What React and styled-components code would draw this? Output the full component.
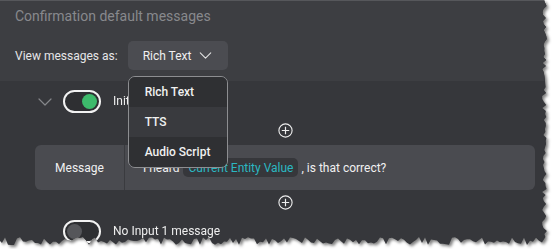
import React from 'react'
import styled, { createGlobalStyle } from 'styled-components'

const GlobalStyle = createGlobalStyle`
  html, body {
    margin: 0;
    background: #ffffff;
  }
  body {
    font-family: Roboto, "Liberation Sans", sans-serif;
  }
`

// jagged "torn paper" outline for the right and bottom edges
function tornEdge(w, h) {
  let seed = 11
  const rnd = () => {
    seed = (seed * 9301 + 49297) % 233280
    return seed / 233280
  }
  const pts = ['0px 0px', `${w - 3}px 0px`]
  for (let y = 3; y < h - 6; y += 3) {
    pts.push(`${(w - 5 + rnd() * 5).toFixed(1)}px ${y}px`)
  }
  for (let x = w - 5; x > 0; x -= 3) {
    pts.push(`${x}px ${(h - 8 + rnd() * 8).toFixed(1)}px`)
  }
  pts.push(`0px ${h - 4}px`)
  return `polygon(${pts.join(', ')})`
}

const PANEL_W = 547
const PANEL_H = 245
const edge = tornEdge(PANEL_W, PANEL_H)

function ChevronDown({ color = '#e4e4e4', w = 13, h = 7 }) {
  return (
    <svg width={w} height={h} viewBox="0 0 14 8" fill="none">
      <path d="M1 1l6 6 6-6" stroke={color} strokeWidth="1.2" strokeLinecap="round" strokeLinejoin="round" />
    </svg>
  )
}

function PlusCircle() {
  return (
    <svg width="15" height="15" viewBox="0 0 15 15" fill="none">
      <circle cx="7.5" cy="7.5" r="6.6" stroke="#eeeeee" strokeWidth="1.1" />
      <path d="M7.5 3.8v7.4M3.8 7.5h7.4" stroke="#eeeeee" strokeWidth="1.2" />
    </svg>
  )
}

function App() {
  return (
    <>
      <GlobalStyle />
      <Frame>
        <Panel style={{ clipPath: edge }}>
          <Header>
            <Title>Confirmation default messages</Title>
            <ViewRow>
              <ViewLabel>View messages as:</ViewLabel>
              <SelectWrap>
                <SelectButton>
                  Rich Text
                  <ChevronDown />
                </SelectButton>
                <Menu>
                  <MenuItem $tone="dark">Rich Text</MenuItem>
                  <MenuItem>TTS</MenuItem>
                  <MenuItem $tone="dark">Audio Script</MenuItem>
                </Menu>
              </SelectWrap>
            </ViewRow>
          </Header>

          <Body>
            <ToggleRow>
              <Caret>
                <ChevronDown color="#85868a" w={14} h={8} />
              </Caret>
              <Toggle $on>
                <Knob $on />
              </Toggle>
              <RowLabel>Initial message</RowLabel>
            </ToggleRow>

            <AddRow $h={19}>
              <PlusCircle />
            </AddRow>

            <Card>
              <CardLabel>Message</CardLabel>
              <CardContent>
                I heard
                <Chip>Current Entity Value</Chip>
                , is that correct?
              </CardContent>
            </Card>

            <AddRow $h={24}>
              <PlusCircle />
            </AddRow>

            <ToggleRow $pad={6}>
              <Toggle>
                <Knob />
              </Toggle>
              <RowLabel>No Input 1 message</RowLabel>
            </ToggleRow>
          </Body>
        </Panel>
      </Frame>
    </>
  )
}

export default App

const Frame = styled.div`
  width: 552px;
  height: 249px;
  overflow: hidden;
  filter: drop-shadow(2px 2px 1.5px rgba(0, 0, 0, 0.5));
`

const Panel = styled.div`
  width: ${PANEL_W}px;
  height: ${PANEL_H}px;
  background: #36373b;
  display: flex;
  flex-direction: column;
  overflow: hidden;
`

const Header = styled.div`
  flex-shrink: 0;
  height: 81px;
  box-sizing: border-box;
  background: #3d3e42;
  border-top: 1px solid #56575b;
  padding: 6px 15px 0;
  display: flex;
  flex-direction: column;
`

const Title = styled.div`
  font-size: 14px;
  line-height: 18px;
  color: #88898d;
`

const ViewRow = styled.div`
  margin-top: 16px;
  display: flex;
  align-items: center;
  gap: 10px;
`

const ViewLabel = styled.span`
  font-size: 12px;
  color: #e6e6e8;
`

const SelectWrap = styled.div`
  position: relative;
`

const SelectButton = styled.div`
  width: 100px;
  height: 29px;
  box-sizing: border-box;
  padding: 0 14px 0 15px;
  border-radius: 5px;
  background: #4b4c51;
  color: #f0f0f0;
  font-size: 12px;
  white-space: nowrap;
  display: flex;
  align-items: center;
  gap: 8px;
`

const Menu = styled.div`
  position: absolute;
  top: 35px;
  left: 0;
  width: 100px;
  box-sizing: border-box;
  border: 1px solid #8d8e91;
  border-radius: 7px;
  overflow: hidden;
  z-index: 5;
  display: flex;
  flex-direction: column;
`

const MenuItem = styled.div`
  height: 30px;
  padding: 0 16px;
  display: flex;
  align-items: center;
  font-size: 12px;
  font-weight: 500;
  color: #f0f0f0;
  background: ${(p) => (p.$tone === 'dark' ? '#2f3033' : '#393a3e')};
`

const Body = styled.div`
  flex-shrink: 0;
  display: flex;
  flex-direction: column;
`

const ToggleRow = styled.div`
  flex-shrink: 0;
  height: 40px;
  box-sizing: border-box;
  padding-top: ${(p) => p.$pad || 0}px;
  padding-left: 63px;
  display: flex;
  align-items: ${(p) => (p.$pad ? 'flex-start' : 'center')};
  gap: 12px;
  position: relative;
`

const Caret = styled.span`
  position: absolute;
  left: 38px;
  top: 17px;
  display: flex;
`

const Toggle = styled.div`
  width: 38px;
  height: 23px;
  box-sizing: border-box;
  border: 2px solid #f2f2f2;
  border-radius: 12px;
  background: #2e2f32;
  display: flex;
  align-items: center;
  justify-content: ${(p) => (p.$on ? 'flex-end' : 'flex-start')};
  padding: 0 2px;
  flex-shrink: 0;
`

const Knob = styled.span`
  width: 15px;
  height: 15px;
  border-radius: 50%;
  background: ${(p) => (p.$on ? '#3dba6b' : '#55565a')};
`

const RowLabel = styled.span`
  font-size: 12px;
  color: #eeeeee;
  line-height: 23px;
`

const AddRow = styled.div`
  flex-shrink: 0;
  height: ${(p) => p.$h}px;
  display: flex;
  align-items: center;
  justify-content: center;
  padding-left: 24px;
`

const Card = styled.div`
  flex-shrink: 0;
  margin: 5px 12px 0 35px;
  height: 45px;
  border-radius: 6px;
  background: #4a4b50;
  display: flex;
`

const CardLabel = styled.div`
  width: 89px;
  border-right: 1px solid #3a3b3f;
  display: flex;
  align-items: center;
  justify-content: center;
  font-size: 12px;
  color: #f0f0f0;
`

const CardContent = styled.div`
  flex: 1;
  padding-left: 18px;
  display: flex;
  align-items: center;
  font-size: 12px;
  color: #f0f0f0;
  white-space: pre;
`

const Chip = styled.span`
  margin: 0 3px 0 4px;
  height: 19px;
  padding: 0 5px;
  border-radius: 5px;
  background: #36373b;
  color: #2bb7c2;
  display: inline-flex;
  align-items: center;
`
